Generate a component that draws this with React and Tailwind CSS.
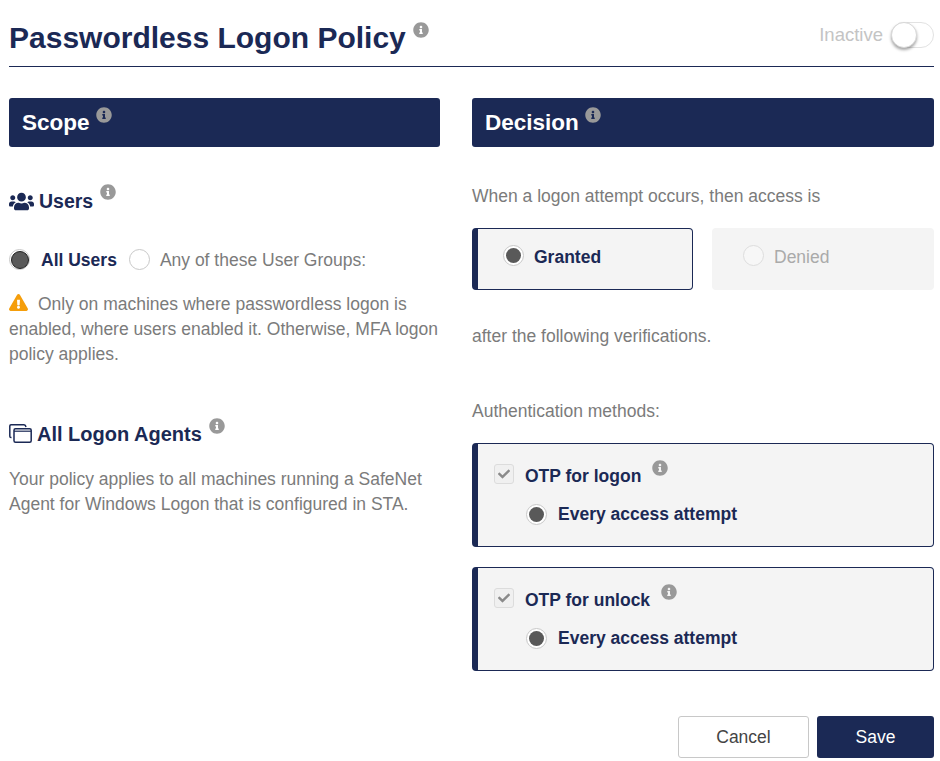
import React from 'react';
import { FaCheck, FaExclamationTriangle, FaInfoCircle, FaUsers } from 'react-icons/fa';

const NAVY = 'text-[#1b2955]';

function Info({ className = '' }) {
  return <FaInfoCircle className={`shrink-0 text-[16px] text-[#999999] ${className}`} />;
}

function Radio({ checked, disabled, big }) {
  return (
    <span
      className={`flex h-[21px] w-[21px] shrink-0 items-center justify-center rounded-full border ${
        disabled ? 'border-[#dddddd] bg-[#f7f7f7]' : 'border-[#c8c8c8] bg-white'
      }`}
    >
      {checked && (
        <span className={`rounded-full bg-[#595959] ${big ? 'h-[18px] w-[18px] border border-[#222222]' : 'h-[15px] w-[15px]'}`} />
      )}
    </span>
  );
}

function WindowsIcon() {
  return (
    <svg viewBox="0 0 23 19" className="mt-[6px] h-[19px] w-[23px] shrink-0 text-[#1b2955]" fill="none" stroke="currentColor" strokeWidth="1.5">
      <path d="M2.5 13.5 H2 Q0.8 13.5 0.8 12.2 V2 Q0.8 0.8 2 0.8 H15 Q16.6 0.8 17 3" />
      <rect x="5" y="4.8" width="17.2" height="13.4" rx="1.5" />
      <path d="M5 7.2 H22" strokeWidth="1.2" />
    </svg>
  );
}

function SectionBar({ title }) {
  return (
    <div className="flex h-[49px] items-start rounded-[3px] bg-[#1b2955] pl-[13px]">
      <span className="mt-[10px] text-[22.5px] font-bold leading-[30px] text-white">{title}</span>
      <Info className="ml-[6px] mt-[9px]" />
    </div>
  );
}

function AuthMethod({ label, infoGap }) {
  return (
    <div className="h-[104px] rounded-[4px] border border-[#1b2955] border-l-[6px] bg-[#f4f4f4] pl-[16px]">
      <div className="flex items-start pt-[20px]">
        <span className="flex h-[20px] w-[20px] items-center justify-center rounded-[3px] border border-[#dcdcdc] bg-[#f0f0f0]">
          <FaCheck className="text-[12px] text-[#8a8a8a]" />
        </span>
        <span className={`ml-[11px] mt-[1px] text-[17.5px] font-bold leading-[22px] ${NAVY}`}>{label}</span>
        <Info className={`${infoGap} -mt-[4px]`} />
      </div>
      <div className="ml-[32px] mt-[16px] flex items-center gap-[11px]">
        <Radio checked />
        <span className={`text-[17.5px] font-bold leading-[22px] ${NAVY}`}>Every access attempt</span>
      </div>
    </div>
  );
}

export default function App() {
  return (
    <div className="h-[761px] w-[940px] overflow-hidden bg-white pl-[9px] pr-[6px] font-['Liberation_Sans',Arial,sans-serif] text-[17.5px] leading-[25px] text-[#7b7b7b]">
      {/* Header */}
      <div className="flex h-[67px] items-start justify-between border-b border-[#1b2955]">
        <div className="flex items-start pt-[20px]">
          <h1 className={`text-[30px] font-bold leading-[36px] ${NAVY}`}>Passwordless Logon Policy</h1>
          <Info className="ml-[7px] mt-[2px]" />
        </div>
        <div className="flex items-center gap-[8px] pt-[22px]">
          <span className="-mt-[2px] text-[18.5px] text-[#c4c4c4]">Inactive</span>
          <span className="relative h-[26px] w-[43px] rounded-full border border-[#e2e2e2] bg-white">
            <span className="absolute -left-px -top-px h-[26px] w-[26px] rounded-full border border-[#d8d8d8] bg-white shadow-[0_2px_3px_rgba(0,0,0,0.35)]" />
          </span>
        </div>
      </div>

      <div className="mt-[31px] flex gap-[32px]">
        {/* Scope column */}
        <div className="w-[431px]">
          <SectionBar title="Scope" />

          <div className="mt-[37px] flex items-start">
            <FaUsers className={`mt-[5px] text-[25px] ${NAVY}`} />
            <span className={`ml-[5px] mt-[5px] text-[19.5px] font-bold leading-[25px] ${NAVY}`}>Users</span>
            <Info className="ml-[7px]" />
          </div>

          <div className="mt-[32px] flex items-center">
            <Radio checked big />
            <span className={`ml-[11px] mt-[2px] font-bold ${NAVY}`}>All Users</span>
            <span className="ml-[12px]"><Radio /></span>
            <span className="ml-[10px] mt-[2px]">Any of these User Groups:</span>
          </div>

          <p className="mt-[19px]">
            <FaExclamationTriangle className="mr-[10px] inline-block align-[-2px] text-[19px] text-[#f59e0b]" />
            Only on machines where passwordless logon is enabled, where users enabled it. Otherwise, MFA logon policy applies.
          </p>

          <div className="mt-[51px] flex items-start">
            <WindowsIcon />
            <span className={`ml-[5px] mt-[4px] text-[20px] font-bold leading-[25px] ${NAVY}`}>All Logon Agents</span>
            <Info className="ml-[7px]" />
          </div>

          <p className="mt-[20px]">Your policy applies to all machines running a SafeNet Agent for Windows Logon that is configured in STA.</p>
        </div>

        {/* Decision column */}
        <div className="w-[462px]">
          <SectionBar title="Decision" />

          <p className="mt-[37px]">When a logon attempt occurs, then access is</p>

          <div className="mt-[19px] flex gap-[19px]">
            <div className="flex h-[62px] w-[221px] items-start rounded-[4px] border border-[#1b2955] border-l-[6px] bg-[#f4f4f4] pl-[25px] pt-[16px]">
              <Radio checked />
              <span className={`ml-[10px] mt-[1px] font-bold leading-[22px] ${NAVY}`}>Granted</span>
            </div>
            <div className="flex h-[62px] w-[222px] items-start rounded-[4px] bg-[#f4f4f4] pl-[31px] pt-[17px]">
              <Radio disabled />
              <span className="ml-[10px] mt-[1px] leading-[22px] text-[#aaaaaa]">Denied</span>
            </div>
          </div>

          <p className="mt-[34px]">after the following verifications.</p>

          <p className="mt-[50px]">Authentication methods:</p>

          <div className="mt-[19px] flex flex-col gap-[20px]">
            <AuthMethod label="OTP for logon" infoGap="ml-[11px]" />
            <AuthMethod label="OTP for unlock" infoGap="ml-[11px]" />
          </div>

          <div className="mt-[45px] flex justify-end gap-[8px]">
            <button className="h-[42px] w-[131px] rounded-[3px] border border-[#c8c8c8] bg-white text-[#444444]">Cancel</button>
            <button className="h-[42px] w-[117px] rounded-[3px] bg-[#1b2955] text-white">Save</button>
          </div>
        </div>
      </div>
    </div>
  );
}
